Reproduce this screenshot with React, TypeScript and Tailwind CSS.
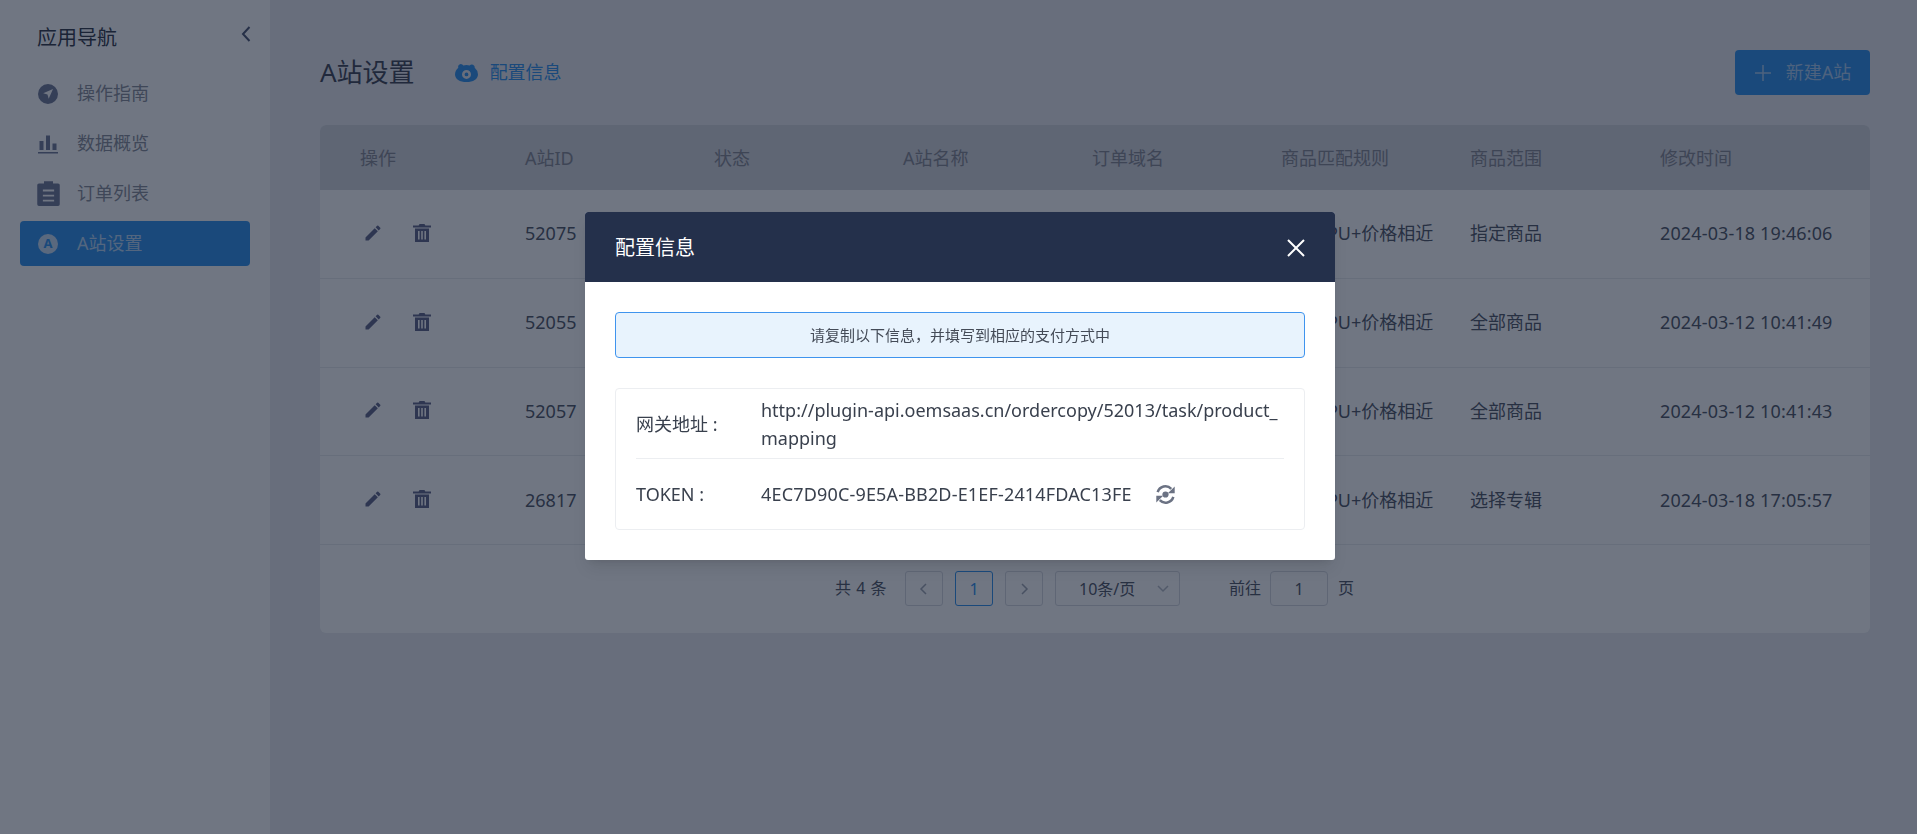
const cols = "grid grid-cols-[205px_189px_189px_189px_189px_189px_190px_1fr]";

const rows = [
  { id: "52075", scope: "指定商品", time: "2024-03-18 19:46:06" },
  { id: "52055", scope: "全部商品", time: "2024-03-12 10:41:49" },
  { id: "52057", scope: "全部商品", time: "2024-03-12 10:41:43" },
  { id: "26817", scope: "选择专辑", time: "2024-03-18 17:05:57" },
];

const headers = ["操作", "A站ID", "状态", "A站名称", "订单域名", "商品匹配规则", "商品范围", "修改时间"];

const CompassIcon = () => (
  <svg width="20" height="20" viewBox="0 0 20 20" fill="currentColor" className="shrink-0">
    <path fillRule="evenodd" d="M10 0a10 10 0 1 1 0 20 10 10 0 0 1 0-20Zm5 5-9.800 4.200 4.300 1.200 1.200 4.400L15 5Z" />
  </svg>
);

const BarsIcon = () => (
  <svg width="20" height="20" viewBox="0 0 20 20" fill="currentColor" className="shrink-0">
    <path d="M1.500 7h4v9h-4zM8 1.500h4V16H8zM14.500 9.500h4V16h-4zM0 18h20v1.500H0z" />
  </svg>
);

const ClipboardIcon = () => (
  <svg width="27" height="27" viewBox="0 0 24 24" fill="currentColor" className="shrink-0">
    <path
      fillRule="evenodd"
      d="M8 1h8v2h4.500A1.500 1.500 0 0 1 22 4.500v17a1.500 1.500 0 0 1-1.500 1.500h-17A1.500 1.500 0 0 1 2 21.500v-17A1.500 1.500 0 0 1 3.500 3H8V1Zm-1 7.500v1.700h10V8.500H7Zm0 4.500v1.700h10V13H7Zm0 4.500v1.700h10v-1.700H7Z"
    />
  </svg>
);

const PencilIcon = () => (
  <svg width="20" height="20" viewBox="0 0 24 24" fill="currentColor" className="shrink-0">
    <path d="M3 17.250V21h3.750L17.810 9.940l-3.750-3.750L3 17.250ZM20.710 7.040a1 1 0 0 0 0-1.410l-2.340-2.340a1 1 0 0 0-1.410 0l-1.830 1.830 3.750 3.750 1.830-1.830Z" />
  </svg>
);

const TrashIcon = () => (
  <svg width="20" height="20" viewBox="0 0 20 20" fill="currentColor" className="shrink-0">
    <path
      fillRule="evenodd"
      d="M7.500 1h5l.8 1.500H19v2H1v-2h5.700L7.500 1ZM3 5.500h14V19H3V5.500ZM6 8v8.500h1.600V8H6Zm3.200 0v8.500h1.600V8H9.200Zm3.200 0v8.500H14V8h-1.600Z"
    />
  </svg>
);

const BearIcon = () => (
  <svg width="23" height="20" viewBox="0 0 24 20" fill="currentColor" className="shrink-0">
    <path
      fillRule="evenodd"
      d="M6 .5a3 3 0 0 1 2.700 1.700 10.500 10.500 0 0 1 6.600 0A3 3 0 0 1 20.600 4.500 9.500 9.500 0 0 1 24 11.500c0 4.700-5 8-12 8s-12-3.300-12-8a9.500 9.500 0 0 1 3.400-7A3 3 0 0 1 6 .5Zm6 6.300a4.700 4.700 0 1 0 0 9.400 4.700 4.700 0 0 0 0-9.400Zm0 2.700a2 2 0 1 1 0 4 2 2 0 0 1 0-4Z"
    />
  </svg>
);

const SyncIcon = () => (
  <svg width="23" height="23" viewBox="0 0 20 20" fill="currentColor" className="shrink-0">
    <circle cx="10" cy="10" r="2.700" />
    <path d="M3.200 8A7 7 0 0 1 15 5.100M16.800 12A7 7 0 0 1 5 14.900" fill="none" stroke="currentColor" strokeWidth="2.200" />
    <path d="M18 3v6h-6zM2 17v-6h6z" />
  </svg>
);

const Chevron = ({ d, className }: { d: string; className: string }) => (
  <svg width="16" height="16" viewBox="0 0 16 16" fill="none" stroke="currentColor" strokeWidth="1.500" className={className}>
    <path d={d} />
  </svg>
);

const Sidebar = () => (
  <aside className="w-[270px] shrink-0 bg-[#ffffff] px-5">
    <div className="flex h-[71px] items-center justify-between pl-[17px] pt-[5px]">
      <span className="text-[20px] leading-none text-[#2c3242]">应用导航</span>
      <svg width="12" height="20" viewBox="0 0 12 20" fill="none" stroke="currentColor" strokeWidth="2" className="mb-[8px] mr-[-2px] text-[#47506e]">
        <path d="M9.500 3 3 10l6.500 7" />
      </svg>
    </div>
    <nav className="flex flex-col gap-[5px] text-[18px] text-[#868a96]">
      <div className="flex h-[45px] items-center gap-[19px] pl-[18px]">
        <span className="flex w-5 justify-center text-[#6d7695]"><CompassIcon /></span>
        操作指南
      </div>
      <div className="flex h-[45px] items-center gap-[19px] pl-[18px]">
        <span className="flex w-5 justify-center text-[#6d7695]"><BarsIcon /></span>
        数据概览
      </div>
      <div className="flex h-[45px] items-center gap-[19px] pl-[18px]">
        <span className="flex w-5 justify-center text-[#6d7695]"><ClipboardIcon /></span>
        订单列表
      </div>
      <div className="flex h-[45px] items-center gap-[19px] rounded-[4px] bg-[#2a8fed] pl-[18px] text-[#b7d8f7]">
        <span className="flex h-5 w-5 items-center justify-center rounded-full bg-[#c9def5] text-[13px] font-bold leading-none text-[#2a8fed]">A</span>
        A站设置
      </div>
    </nav>
  </aside>
);

const Table = () => (
  <div className="overflow-hidden rounded-[6px] bg-white">
    <div className={`${cols} h-[65px] items-center bg-[#d4d6dd] pt-[2px] text-[18px] text-[#82858f]`}>
      {headers.map((h, i) => (
        <div key={h} className={i === 0 ? "pl-10" : ""}>{h}</div>
      ))}
    </div>
    {rows.map((r) => (
      <div key={r.id} className={`${cols} h-[88.800px] items-center border-b border-[#e8eaee] text-[18px] text-[#4a5060]`}>
        <div className="flex items-center gap-[29px] pb-[2px] pl-[43px] text-[#5a5f85]">
          <PencilIcon />
          <TrashIcon />
        </div>
        <div>{r.id}</div>
        <div />
        <div />
        <div />
        <div>相同SPU+价格相近</div>
        <div>{r.scope}</div>
        <div className="tracking-[0.13px]">{r.time}</div>
      </div>
    ))}
    <div className="flex h-[88px] items-start pl-[515px] pt-[26px] text-[16px] text-[#4a5060]">
      <span className="w-[70px] leading-[35px] tracking-[0.5px]">共 4 条</span>
      <div className="flex h-[35px] w-[38px] items-center justify-center rounded-[3px] border border-[#d5d8df] text-[#9da3b0]">
        <Chevron d="M10 3 5 8l5 5" className="" />
      </div>
      <div className="ml-3 flex h-[35px] w-[38px] items-center justify-center rounded-[3px] border border-[#2a8fed] text-[#2a8fed]">1</div>
      <div className="ml-3 flex h-[35px] w-[38px] items-center justify-center rounded-[3px] border border-[#d5d8df] text-[#9da3b0]">
        <Chevron d="M6 3l5 5-5 5" className="" />
      </div>
      <div className="relative ml-3 flex h-[35px] w-[125px] items-center pl-[23px] rounded-[3px] border border-[#d5d8df]">
        10条/页
        <Chevron d="M3 6l5 5 5-5" className="absolute right-[8px] top-[8px] text-[#b4b9c4]" />
      </div>
      <span className="ml-[49px] leading-[35px]">前往</span>
      <div className="ml-[9px] flex h-[35px] w-[58px] items-center justify-center rounded-[4px] border border-[#d5d8df]">1</div>
      <span className="ml-[10px] leading-[35px]">页</span>
    </div>
  </div>
);

const Modal = () => (
  <div className="fixed left-[585px] top-[212px] w-[750px] overflow-hidden rounded-[3px] bg-white shadow-lg">
    <div className="flex h-[70px] items-center justify-between bg-[#24304b] pl-[30px] pr-[29px] pt-[2px] text-white">
      <span className="text-[20px]">配置信息</span>
      <svg width="20" height="20" viewBox="0 0 20 20" fill="none" stroke="currentColor" strokeWidth="2">
        <path d="M2 2l16 16M18 2 2 18" />
      </svg>
    </div>
    <div className="p-[30px]">
      <div className="flex h-[46px] items-center justify-center rounded-[4px] border border-[#3f94ee] bg-[#e8f3fd] text-[15px] text-[#444b57]">
        请复制以下信息，并填写到相应的支付方式中
      </div>
      <div className="mt-[30px] rounded-[4px] border border-[#eceef1] px-5 pt-[7px] text-[18px] text-[#39404d]">
        <div className="flex items-center border-b border-[#eceef1] pb-[6px]">
          <span className="w-[125px] shrink-0">网关地址 :</span>
          <span className="break-all leading-[28px]">http://plugin-api.oemsaas.cn/ordercopy/52013/task/product_mapping</span>
        </div>
        <div className="flex h-[70px] items-center">
          <span className="w-[125px] shrink-0">TOKEN :</span>
          <span className="tracking-[0.17px]">4EC7D90C-9E5A-BB2D-E1EF-2414FDAC13FE</span>
          <span className="ml-[22px] text-[#6b7283]"><SyncIcon /></span>
        </div>
      </div>
    </div>
  </div>
);

export default function App() {
  return (
    <div className="relative flex h-screen overflow-hidden bg-[#eaebef] font-['Noto_Sans','Noto_Sans_CJK_SC',sans-serif] text-[#5c6272]">
      <Sidebar />
      <main className="min-w-0 flex-1 pl-[50px] pr-[47px] pt-[50px]">
        <div className="mb-[30px] flex h-[45px] items-center">
          <span className="text-[26px] text-[#3a4050]">A站设置</span>
          <span className="ml-[40px] text-[#2a8fed]"><BearIcon /></span>
          <span className="ml-[12px] text-[18px] text-[#2a8fed]">配置信息</span>
          <button className="ml-auto flex h-[45px] w-[135px] items-center justify-center gap-[14px] rounded-[4px] bg-[#2a8fed] text-[18px] text-[#a8cef5]">
            <svg width="18" height="18" viewBox="0 0 18 18" fill="none" stroke="currentColor" strokeWidth="1.500">
              <path d="M9 1v16M1 9h16" />
            </svg>
            新建A站
          </button>
        </div>
        <Table />
      </main>
      <div className="fixed inset-0 bg-[#111a2e]/60" />
      <Modal />
    </div>
  );
}
